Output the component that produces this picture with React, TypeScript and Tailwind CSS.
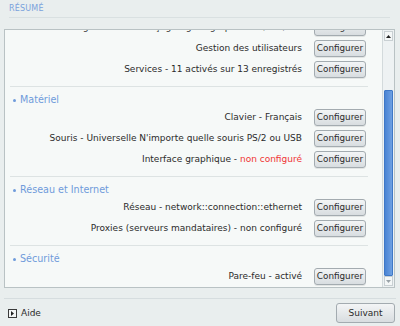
type Row = { label: string; status?: string; alert?: boolean };
type Section = { title?: string; rows: Row[] };

const sections: Section[] = [
  {
    rows: [
      { label: "Programme d'amorçage - grub-graphic sur /dev/sda" },
      { label: 'Gestion des utilisateurs' },
      { label: 'Services - 11 activés sur 13 enregistrés' },
    ],
  },
  {
    title: 'Matériel',
    rows: [
      { label: 'Clavier - Français' },
      { label: "Souris - Universelle N'importe quelle souris PS/2 ou USB" },
      { label: 'Interface graphique', status: 'non configuré', alert: true },
    ],
  },
  {
    title: 'Réseau et Internet',
    rows: [
      { label: 'Réseau - network::connection::ethernet' },
      { label: 'Proxies (serveurs mandataires) - non configuré' },
    ],
  },
  {
    title: 'Sécurité',
    rows: [{ label: 'Pare-feu - activé' }],
  },
];

function ConfigButton() {
  return (
    <button className="w-[52px] h-[17px] shrink-0 rounded-[3px] border border-[#a3abb0] bg-gradient-to-b from-[#f3f5f6] to-[#d8dde0] text-[8.8px] leading-none text-[#2b2b2b] shadow-[0_1px_0_rgba(0,0,0,0.08)]">
      Configurer
    </button>
  );
}

function Scrollbar() {
  return (
    <div className="w-[12px] shrink-0 flex flex-col border-l border-[#d3dadc] bg-[#eef2f3] px-[1px] py-[1px]">
      <div className="h-[10px] flex items-center justify-center border border-[#c9d0d3] bg-[#f4f7f7]">
        <svg width="5" height="3" viewBox="0 0 5 3">
          <path d="M0 3 L2.5 0 L5 3 Z" fill="#222" />
        </svg>
      </div>
      <div className="h-[49px]" />
      <div className="flex-1 rounded-[1px] border border-[#3f78c6] bg-gradient-to-r from-[#4a84d4] to-[#6ea0e2]" />
      <div className="h-[10px] flex items-center justify-center border border-[#c9d0d3] bg-[#f4f7f7]">
        <svg width="5" height="3" viewBox="0 0 5 3">
          <path d="M0 0 L2.5 3 L5 0 Z" fill="#9aa3a8" />
        </svg>
      </div>
    </div>
  );
}

export default function App() {
  return (
    <div
      className="w-[400px] h-[326px] flex flex-col bg-[#e9eeee] text-[#2b2b2b] overflow-hidden"
      style={{ fontFamily: '"DejaVu Sans", sans-serif' }}
    >
      {/* header */}
      <div className="h-[18px] mx-[9px] mr-[10px] pt-[5px] border-b border-[#d9e0e1]">
        <span className="block text-[8px] leading-[8px] tracking-[0.2px] text-[#7aa2dc]">RÉSUMÉ</span>
      </div>

      {/* summary panel */}
      <div className="mt-[11px] ml-[4px] mr-[5px] h-[259px] flex border border-[#b9c2c4] bg-[#f6f9f8]">
        <div className="flex-1 overflow-hidden">
          <div className="-mt-[11px]">
            {sections.map((section, si) => (
              <div key={si} className={si > 0 ? 'mx-[5px] mr-[14px] border-t border-[#dde3e3]' : 'mx-[5px] mr-[14px]'}>
                {section.title && (
                  <div className="flex items-center h-[12px] mt-[7px] pl-[3px] text-[9.6px] leading-none text-[#6f9bdb]">
                    <span className="w-[3px] h-[3px] rounded-full bg-[#6f9bdb] mr-[4px]" />
                    {section.title}
                  </div>
                )}
                <div className={`flex flex-col gap-[4px] pb-[8px] ${section.title ? 'pt-[3px]' : ''}`}>
                  {section.rows.map((row, ri) => (
                    <div key={ri} className="flex items-center justify-end gap-[12px] pr-[2px]">
                      <span className="text-[9px] leading-none whitespace-nowrap">
                        {row.label}
                        {row.status && (
                          <>
                            {' - '}
                            <span className={row.alert ? 'text-[#f03434]' : ''}>{row.status}</span>
                          </>
                        )}
                      </span>
                      <ConfigButton />
                    </div>
                  ))}
                </div>
              </div>
            ))}
          </div>
        </div>
        <Scrollbar />
      </div>

      {/* footer */}
      <div className="mt-[10px] ml-[4px] mr-[4px] border-t border-[#d6dddf] flex items-center justify-between pt-[4px]">
        <div className="flex items-center gap-[4px] pl-[4px]">
          <span className="w-[9px] h-[9px] border border-[#3a3a3a] flex items-center justify-center bg-[#f3f5f5]">
            <svg width="3" height="5" viewBox="0 0 3 5">
              <path d="M0 0 L3 2.5 L0 5 Z" fill="#222" />
            </svg>
          </span>
          <span className="text-[9px] leading-none">Aide</span>
        </div>
        <button className="w-[59px] h-[20px] mr-[1px] rounded-[3px] border border-[#a3abb0] bg-gradient-to-b from-[#f3f5f6] to-[#d8dde0] text-[9px] leading-none text-[#2b2b2b]">
          Suivant
        </button>
      </div>
    </div>
  );
}
